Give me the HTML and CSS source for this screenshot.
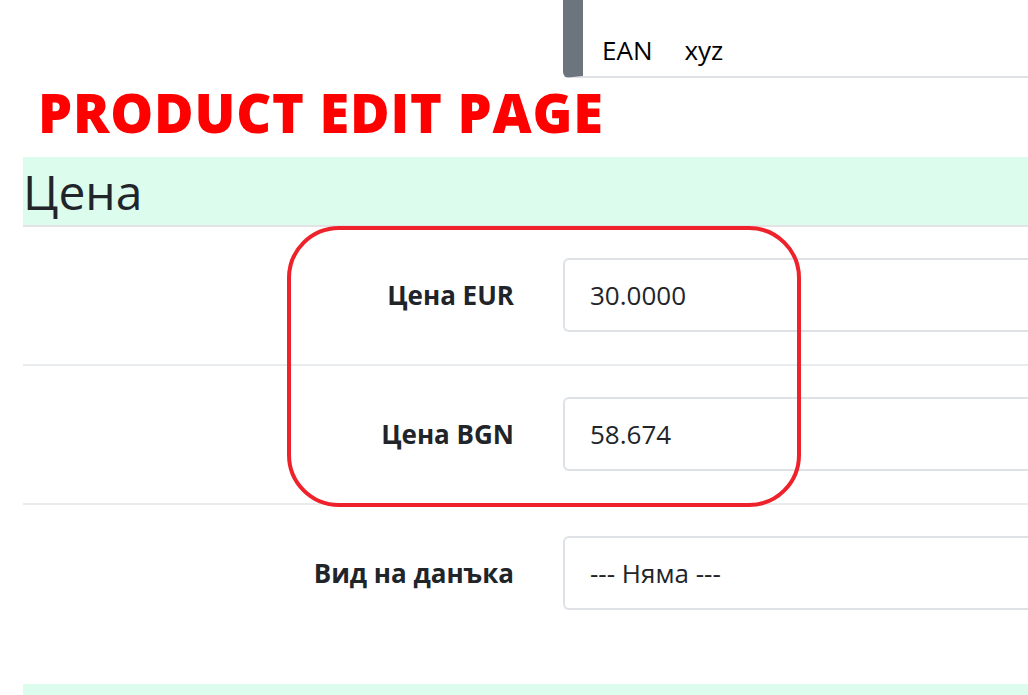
FILE: index.html
```html
<!DOCTYPE html>
<html>
<head>
<meta charset="utf-8">
<link rel="stylesheet" href="styles.css">
</head>
<body>
<div class="page">
  <div class="ean-row">
    <div class="ean-box">
      <span class="ean-label">EAN</span>
      <span class="ean-value">xyz</span>
    </div>
  </div>
  <h1 class="title">PRODUCT EDIT PAGE</h1>
  <div class="section-head">Цена</div>
  <div class="rows">
    <div class="highlight"></div>
    <div class="row">
      <label class="label">Цена EUR</label>
      <div class="input">30.0000</div>
    </div>
    <div class="row">
      <label class="label">Цена BGN</label>
      <div class="input">58.674</div>
    </div>
    <div class="row last">
      <label class="label">Вид на данъка</label>
      <div class="input">--- Няма ---</div>
    </div>
  </div>
  <div class="section-next"></div>
</div>
</body>
</html>
```
FILE: styles.css
```css
* { box-sizing: border-box; }
html, body { margin: 0; padding: 0; background: #fff; overflow: hidden; }
body { font-family: "Open Sans", "Noto Sans", sans-serif; color: #212529; width: 1028px; height: 695px; }
.page { padding-left: 23px; }
.ean-row { display: flex; padding-left: 540px; }
.ean-box {
  flex: 1;
  height: 78px;
  border-left: 20px solid #6c757d;
  border-bottom: 2px solid #dee2e6;
  border-bottom-left-radius: 6px;
  display: flex;
  align-items: flex-end;
  padding: 0 0 8px 19px;
  font-size: 26px;
  color: #000;
}
.ean-value { margin-left: 32px; }
.title {
  margin: 0;
  padding: 1px 0 0 15px;
  height: 79px;
  color: #ff0000;
  font-size: 54px;
  font-weight: 800;
  line-height: 66px;
  letter-spacing: 0.8px;
}
.section-head {
  background: #dcfcee;
  height: 70px;
  border-bottom: 2px solid #e3e3e3;
  font-size: 48px;
  line-height: 70px;
  color: #212529;
}
.rows { position: relative; }
.highlight {
  position: absolute;
  left: 264px;
  top: -1px;
  width: 514px;
  height: 281px;
  border: 4px solid #ee222b;
  border-radius: 52px;
  pointer-events: none;
  z-index: 2;
}
.row {
  display: flex;
  align-items: flex-start;
  height: 139px;
  padding-top: 31px;
  border-bottom: 2px solid #e9ecef;
}
.row.last { border-bottom: none; height: 179px; }
.label {
  width: 491px;
  text-align: right;
  font-weight: 700;
  font-size: 26px;
  line-height: 74px;
  color: #212529;
}
.input {
  margin-left: 49px;
  flex: 1;
  height: 74px;
  border: 2px solid #dee2e6;
  border-right: none;
  border-radius: 6px 0 0 6px;
  display: flex;
  align-items: center;
  padding-left: 25px;
  font-size: 26px;
  color: #212529;
}
.section-next { background: #dcfcee; height: 20px; }
```
